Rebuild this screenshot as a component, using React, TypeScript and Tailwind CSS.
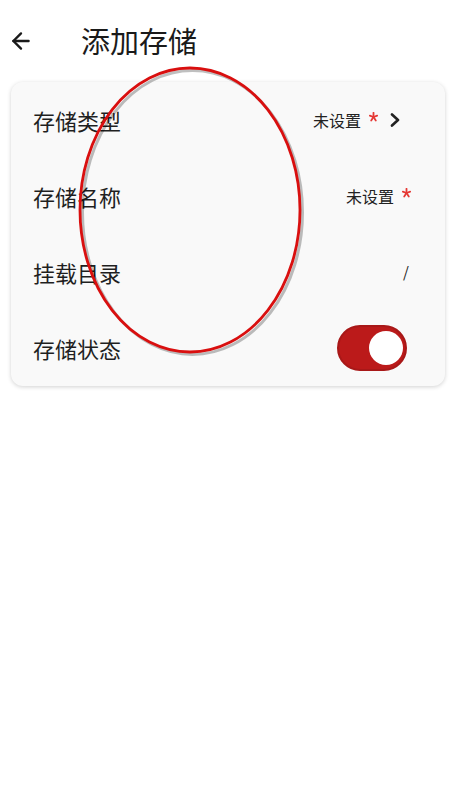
import { ArrowLeft } from 'lucide-react';

type Row = {
  label: string;
  kind: 'select' | 'text' | 'path' | 'switch';
};

const rows: Row[] = [
  { label: '存储类型', kind: 'select' },
  { label: '存储名称', kind: 'text' },
  { label: '挂载目录', kind: 'path' },
  { label: '存储状态', kind: 'switch' },
];

function Star() {
  return (
    <svg className="mb-[6px] ml-[8px]" width="9" height="10" viewBox="0 0 9 10">
      <g stroke="#e53935" strokeWidth="1.8" strokeLinecap="round">
        <line x1="4.5" y1="0.8" x2="4.5" y2="5" />
        <line x1="4.5" y1="5" x2="0.8" y2="3.6" />
        <line x1="4.5" y1="5" x2="8.2" y2="3.6" />
        <line x1="4.5" y1="5" x2="2.2" y2="8.6" />
        <line x1="4.5" y1="5" x2="6.8" y2="8.6" />
      </g>
    </svg>
  );
}

function Toggle() {
  return (
    <div className="flex h-[46px] w-[70px] items-center justify-end rounded-full border-2 border-[#a81818] bg-[#bb1a1a] pr-[2px]">
      <div className="h-[34px] w-[34px] rounded-full bg-white" />
    </div>
  );
}

function RowValue({ kind }: { kind: Row['kind'] }) {
  if (kind === 'switch') return <Toggle />;
  if (kind === 'path') return <span className="text-[15px] text-[#222]">/</span>;
  return (
    <div className="flex items-center">
      <span className="text-[16px] text-[#222]">未设置</span>
      <Star />
      {kind === 'select' && (
        <svg className="ml-[12px]" width="10" height="14" viewBox="0 0 10 14">
          <polyline points="2,1.5 8,7 2,12.5" fill="none" stroke="#222" strokeWidth="2.6" strokeLinecap="round" strokeLinejoin="round" />
        </svg>
      )}
    </div>
  );
}

const padRight: Record<Row['kind'], string> = {
  select: 'pr-[45px]',
  text: 'pr-[34px]',
  path: 'pr-[36px]',
  switch: 'pr-[38px]',
};

export default function App() {
  return (
    <div
      className="relative min-h-[803px] w-full bg-white"
      style={{ fontFamily: '"Noto Sans CJK SC", "Noto Sans", sans-serif' }}
    >
      <header className="flex h-[82px] items-center pl-[8px]">
        <ArrowLeft className="h-[26px] w-[26px] text-[#1a1a1a]" strokeWidth={2.2} />
        <h1 className="ml-[47px] text-[29px] text-[#1a1a1a]">添加存储</h1>
      </header>

      <div className="ml-[11px] mr-[4px] overflow-hidden rounded-[12px] bg-[#f9f9f9] shadow-[0_1px_4px_rgba(0,0,0,0.18)]">
        {rows.map((r) => (
          <div key={r.label} className={`flex h-[76px] items-center justify-between pl-[22px] ${padRight[r.kind]}`}>
            <span className="text-[22px] text-[#1f1f1f]">{r.label}</span>
            <RowValue kind={r.kind} />
          </div>
        ))}
      </div>

      {/* red annotation ellipse over the content */}
      <svg className="pointer-events-none absolute left-0 top-0" width="449" height="400" viewBox="0 0 449 400">
        <ellipse cx="191" cy="211" rx="110" ry="142" fill="none" stroke="rgba(0,0,0,0.25)" strokeWidth="3" transform="translate(1.5 1.5)" />
        <ellipse cx="190" cy="210" rx="110" ry="142" fill="none" stroke="#d90f0f" strokeWidth="2.8" />
      </svg>
    </div>
  );
}
